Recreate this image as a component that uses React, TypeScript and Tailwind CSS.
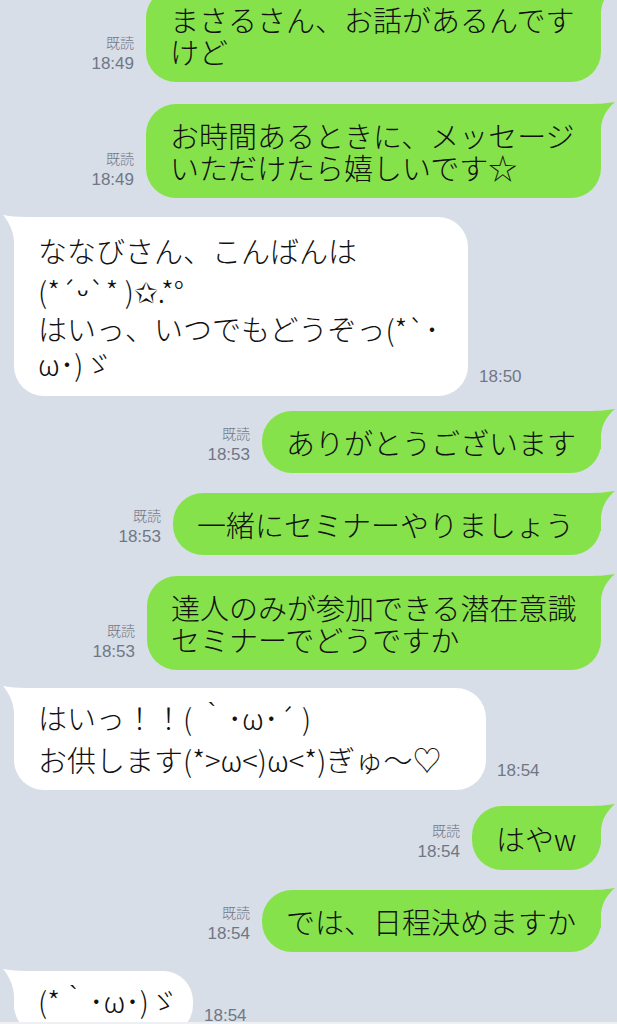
import React from "react";

const GREEN = "#86e24b";

function SentTail() {
  return (
    <svg className="absolute right-[-14px] top-[-2px] w-[45px] h-[40px]" viewBox="0 0 45 40">
      <path d="M0,2 L18,2 C30,2 38,1 45,0 C38,6 32,14 31,26 L31,40 L0,40 Z" fill={GREEN} />
    </svg>
  );
}

function RecvTail() {
  return (
    <svg className="absolute left-[-11px] top-[-2px] w-[42px] h-[40px]" viewBox="0 0 42 40">
      <path d="M42,2 L24,2 C14,2 6,1 0,0 C5,6 10,14 11,26 L11,40 L42,40 Z" fill="#ffffff" />
    </svg>
  );
}

const bubbleFont = { fontFamily: '"Noto Sans CJK JP", "DejaVu Sans", sans-serif' };

function Sent({
  lines,
  time,
  width,
  mt,
  py = "py-[15px]",
}: {
  lines: string[];
  time: string;
  width: string;
  mt: string;
  py?: string;
}) {
  return (
    <div className={`flex justify-end items-end gap-[12px] pr-[16px] ${mt}`}>
      <div
        className="flex flex-col items-end mb-[8px] text-[#6f7786]"
        style={{ fontFamily: '"Liberation Sans", "Noto Sans CJK JP", sans-serif' }}
      >
        <span className="text-[14px] leading-[20px] font-light">既読</span>
        <span className="text-[17px] leading-[20px] mt-[1px]">{time}</span>
      </div>
      <div
        className={`relative rounded-[30px] bg-[#86e24b] pl-[24px] pr-[20px] ${py} ${width} text-[29px] leading-[32px] font-light text-[#111111] whitespace-nowrap`}
        style={bubbleFont}
      >
        <SentTail />
        <div className="relative">
          {lines.map((l, i) => (
            <div key={i}>{l}</div>
          ))}
        </div>
      </div>
    </div>
  );
}

function Recv({
  lines,
  time,
  width,
  mt,
  box,
}: {
  lines: { t: string; h: string }[];
  time: string;
  width: string;
  mt: string;
  box: string;
}) {
  return (
    <div className={`flex items-end gap-[11px] pl-[14px] ${mt}`}>
      <div
        className={`relative rounded-[30px] bg-white pl-[24px] pr-[16px] ${box} ${width} text-[29px] font-light text-[#111111] whitespace-nowrap`}
        style={bubbleFont}
      >
        <RecvTail />
        <div className="relative">
          {lines.map((l, i) => (
            <div key={i} className={`${l.h} flex items-center`}>
              {l.t}
            </div>
          ))}
        </div>
      </div>
      <span
        className="mb-[9px] text-[17px] leading-[20px] text-[#6f7786]"
        style={{ fontFamily: '"Liberation Sans", sans-serif' }}
      >
        {time}
      </span>
    </div>
  );
}

export default function App() {
  return (
    <div className="w-full h-[1024px] overflow-hidden bg-[#d8dee7] flex flex-col">
      <div className="flex-1 min-h-0 overflow-hidden flex flex-col">
        <Sent
          lines={["まさるさん、お話があるんです", "けど"]}
          time="18:49"
          width="w-[455px]"
          mt="mt-[-12px]"
        />
        <Sent
          lines={["お時間あるときに、メッセージ", "いただけたら嬉しいです☆"]}
          time="18:49"
          width="w-[455px]"
          mt="mt-[22px]"
        />
        <Recv
          lines={[
            { t: "ななびさん、こんばんは", h: "h-[38px]" },
            { t: "(*´ᵕ`* )✩.*°", h: "h-[41px]" },
            { t: "はいっ、いつでもどうぞっ(*`･", h: "h-[35px]" },
            { t: "ω･)ゞ", h: "h-[36px]" },
          ]}
          time="18:50"
          width="w-[454px]"
          mt="mt-[19px]"
          box="pt-[15px] pb-[14px]"
        />
        <Sent lines={["ありがとうございます"]} time="18:53" width="w-[339px]" mt="mt-[15px]" />
        <Sent lines={["一緒にセミナーやりましょう"]} time="18:53" width="w-[428px]" mt="mt-[20px]" />
        <Sent
          lines={["達人のみが参加できる潜在意識", "セミナーでどうですか"]}
          time="18:53"
          width="w-[454px]"
          mt="mt-[21px]"
        />
        <Recv
          lines={[
            { t: "はいっ！！( ｀･ω･´ )", h: "h-[40px]" },
            { t: "お供します(*>ω<)ω<*)ぎゅ〜♡", h: "h-[43px]" },
          ]}
          time="18:54"
          width="w-[472px]"
          mt="mt-[18px]"
          box="pt-[10px] pb-[9px]"
        />
        <Sent lines={["はやw"]} time="18:54" width="w-[129px]" mt="mt-[16px]" py="py-[16px]" />
        <Sent lines={["では、日程決めますか"]} time="18:54" width="w-[339px]" mt="mt-[20px]" />
        <Recv
          lines={[{ t: "(*｀･ω･)ゞ", h: "h-[40px]" }]}
          time="18:54"
          width="w-[179px]"
          mt="mt-[19px]"
          box="pt-[10px] pb-[14px]"
        />
      </div>
      <div className="h-[2px] bg-[#eef0f3] shrink-0" />
    </div>
  );
}
